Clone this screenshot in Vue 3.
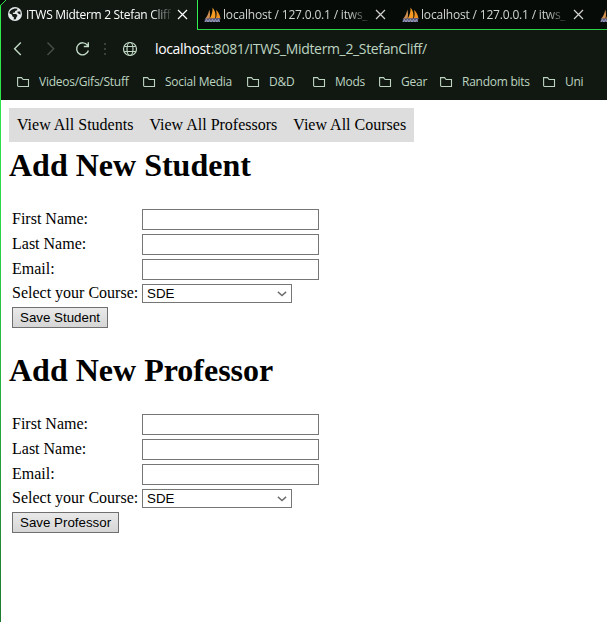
<script setup>
const sailTabs = [1, 2]
const bookmarks = [
  { name: 'Videos/Gifs/Stuff', key: 'videos' },
  { name: 'Social Media', key: 'social' },
  { name: 'D&D', key: 'dnd' },
  { name: 'Mods', key: 'mods' },
  { name: 'Gear', key: 'gear' },
  { name: 'Random bits', key: 'random' },
  { name: 'Uni', key: 'uni' },
]
const links = ['View All Students', 'View All Professors', 'View All Courses']
const forms = ['Student', 'Professor']
const fields = ['First Name:', 'Last Name:', 'Email:']
</script>

<template>
  <div class="window">
    <svg width="0" height="0" class="defs">
      <symbol id="sail" viewBox="0 0 17 16">
        <path d="M1 12C3.500 9 4.800 6 5.200 2.500C6.400 6 6.200 9 5.400 12Z" fill="#d08f50" />
        <path d="M5.500 12C8 8 8.800 4 8.500 .500C11.600 4 12 8 11 12Z" fill="#f59a22" />
        <path d="M11.500 12C13 8.500 12.800 6 12 3C14.800 5 16.400 9 16.400 12Z" fill="#ee9122" />
        <path d="M1 11.500L16.500 11L15.500 15H.500Z" fill="#55577f" />
        <path d="M1 15L2.500 12.500L4 15L5.500 12.500L7 15L8.500 12.500L10 15L11.500 12.500L13 15L14.500 12.500L15.500 15" fill="none" stroke="#b0b0c6" stroke-width=".8" />
      </symbol>
      <symbol id="close" viewBox="0 0 11 11">
        <path d="M1 1L10 10M10 1L1 10" fill="none" stroke="currentColor" stroke-width="1.2" />
      </symbol>
    </svg>

    <header class="chrome">
      <div class="tabs">
        <div class="tab active">
          <svg class="earth" viewBox="0 0 14 14">
            <circle cx="7" cy="7" r="7" fill="#e7eaed" />
            <path d="M6.800 1.500L9.500 1.700L9 3.300L7.200 4L6.800 5.500L4.700 5.700L5 7L8.300 7.100L9.500 8.700L8.400 10.200L7.800 12.200L5.600 12.500L6 10.500L4.300 9.300L4 7.800L1.300 6.200C1.600 4 3.500 2 6.800 1.500Z" fill="#151b16" />
            <path d="M9.700 4.400L12.300 4.500L12.700 7.500L11 7L9.500 5.800Z" fill="#151b16" />
          </svg>
          <span class="title first">ITWS Midterm 2 Stefan Cliff</span>
          <svg class="close"><use href="#close" /></svg>
        </div>
        <div class="inactive">
          <div v-for="t in sailTabs" :key="t" class="tab">
            <svg class="sail"><use href="#sail" /></svg>
            <span class="title">localhost / 127.0.0.1 / itws_</span>
            <svg class="close"><use href="#close" /></svg>
          </div>
          <div class="tab"><svg class="sail"><use href="#sail" /></svg></div>
        </div>
      </div>

      <div class="toolbar">
        <svg class="controls" viewBox="0 0 150 38" fill="none" stroke="#c0d8c4" stroke-width="1.400">
          <path d="M20.800 12.500L14.600 18.700L20.800 25" />
          <path d="M47.500 12.500L53.700 18.700L47.500 25" stroke="#465048" />
          <path d="M87.500 15.300A6 6 0 1 0 88.400 20.500M88.300 12.300V16.500H83.800" />
          <path d="M105 13v2M105 18v2M105 23v2" stroke="#39413a" stroke-width="2" />
          <g stroke-width="1.200">
            <circle cx="130" cy="19" r="6.500" />
            <ellipse cx="130" cy="19" rx="3" ry="6.500" />
            <path d="M124.300 16.500H135.700M124.300 21.500H135.700" />
          </g>
        </svg>
        <div class="url"><b>localhost</b>:8081/ITWS_Midterm_2_StefanCliff/</div>
      </div>

      <div class="bookmarks">
        <div v-for="b in bookmarks" :key="b.key" class="bookmark">
          <svg class="folder" viewBox="0 0 13 12">
            <path d="M.600 9.600V1.600H4.600L6.100 3.500H11.500V10.500H1.500Q.600 10.500 .600 9.600Z" fill="none" stroke="#bdd4c0" stroke-width="1.100" />
          </svg>
          <span :class="b.key">{{ b.name }}</span>
        </div>
      </div>
    </header>

    <main class="page">
      <nav class="nav">
        <a v-for="l in links" :key="l">{{ l }}</a>
      </nav>
      <section v-for="f in forms" :key="f">
        <h1>Add New {{ f }}</h1>
        <form class="form" @submit.prevent>
          <template v-for="label in fields" :key="label">
            <label>{{ label }}</label>
            <input type="text" />
          </template>
          <label class="short">Select your Course:</label>
          <div class="select">
            SDE
            <svg viewBox="0 0 10 6"><path d="M.900 .900L5 4.500L9.100 .900" fill="none" stroke="#6c6c6c" stroke-width="1.400" /></svg>
          </div>
          <button type="button">Save {{ f }}</button>
        </form>
      </section>
    </main>
    <svg class="corner" viewBox="0 0 7 7"><path d="M0 0H5.500L0 5.500Z" fill="#050906" /><path d="M.500 5.500L6 0" stroke="#2ee64b" /></svg>
  </div>
</template>

<style>
body {
  background: #fff;
  overflow: hidden;
}
</style>

<style scoped>
.window {
  position: relative;
  box-sizing: border-box;
  width: 607px;
  height: 622px;
  padding-left: 1px;
  background: linear-gradient(#2ff04c, #2bd748 35%, #1e7a30) left / 1px 100% no-repeat;
  overflow: hidden;
}
.defs {
  position: absolute;
}
.corner {
  position: absolute;
  left: 0;
  top: 0;
  width: 7px;
  height: 7px;
}
.chrome {
  height: 100px;
  background: #111812;
  font-family: "Open Sans", "Noto Sans", sans-serif;
}
.tabs {
  display: flex;
  height: 30px;
  color: #fff;
}
.tab {
  box-sizing: border-box;
  display: flex;
  flex: none;
  align-items: center;
  width: 198px;
  height: 30px;
  padding-left: 7px;
}
.tab.active {
  width: 196px;
}
.inactive {
  box-sizing: border-box;
  display: flex;
  flex: 1;
  min-width: 0;
  height: 30px;
  overflow: hidden;
  border-left: 1px solid #2ff04c;
  border-bottom: 1px solid #2bd244;
  background: #070b08;
  color: #d2d4d2;
}
.earth {
  width: 14px;
  height: 14px;
  margin: 0 4px 2px 0;
}
.sail {
  flex: none;
  width: 17px;
  height: 16px;
  margin: 0 2px 1px -1px;
}
.title {
  width: 145px;
  overflow: hidden;
  white-space: nowrap;
  font-size: 12px;
  line-height: 18px;
  margin-bottom: 1px;
  -webkit-mask-image: linear-gradient(90deg, #000 125px, transparent 148px);
  mask-image: linear-gradient(90deg, #000 125px, transparent 148px);
}
.inactive .title {
  width: 146px;
  letter-spacing: -0.18px;
}
.title.first {
  letter-spacing: -0.3px;
}
.close {
  flex: none;
  width: 11px;
  height: 11px;
  margin: 0 0 1px 6px;
}
.toolbar {
  display: flex;
  height: 38px;
}
.controls {
  width: 150px;
  height: 38px;
  margin-left: -1px;
}
.url {
  margin-left: 5px;
  line-height: 37px;
  font-size: 14px;
  letter-spacing: -0.35px;
  color: #bdd4c0;
  white-space: nowrap;
}
.url b {
  color: #fff;
  font-weight: 400;
}
.bookmarks {
  display: grid;
  grid-template-columns: 126px 104px 66px 66px 61px 103px 60px;
  height: 28px;
  padding-left: 16px;
  align-items: center;
  color: #bdd4c0;
  font-size: 12px;
  line-height: 18px;
  letter-spacing: -0.25px;
  white-space: nowrap;
}
.bookmark {
  display: flex;
  align-items: center;
}
.folder {
  width: 13px;
  height: 12px;
  margin-right: 9px;
}
.page {
  padding: 8px;
  font: 16px "Liberation Serif", serif;
  color: #000;
}
.nav {
  display: flex;
  width: 405px;
  height: 34px;
  background: #ddd;
}
.nav a {
  padding: 0 8px;
  line-height: 34px;
  white-space: nowrap;
}
h1 {
  margin: 5px 0 26px;
  font-size: 32px;
  line-height: 36px;
}
.form {
  display: grid;
  grid-template-columns: 126px 177px;
  gap: 4px;
  margin: 0 0 24px 3px;
}
label {
  line-height: 19px;
  white-space: nowrap;
}
.short {
  line-height: 18px;
}
input {
  box-sizing: border-box;
  width: 177px;
  height: 21px;
  margin: 0;
  border: 1px solid #767676;
  background: #fff;
}
.select {
  box-sizing: border-box;
  display: flex;
  align-items: center;
  justify-content: space-between;
  width: 150px;
  height: 19px;
  padding: 0 4px;
  border: 1px solid #767676;
  font: 13.333px "Liberation Sans", sans-serif;
}
.select svg {
  width: 10px;
  height: 6px;
}
button {
  grid-column: span 2;
  justify-self: start;
  height: 21px;
  padding: 0 7px;
  border: 1px solid #707070;
  border-radius: 0;
  background: linear-gradient(#e9e9e9, #d6d6d6);
  font: 13.333px "Liberation Sans", sans-serif;
  color: #000;
}
</style>
